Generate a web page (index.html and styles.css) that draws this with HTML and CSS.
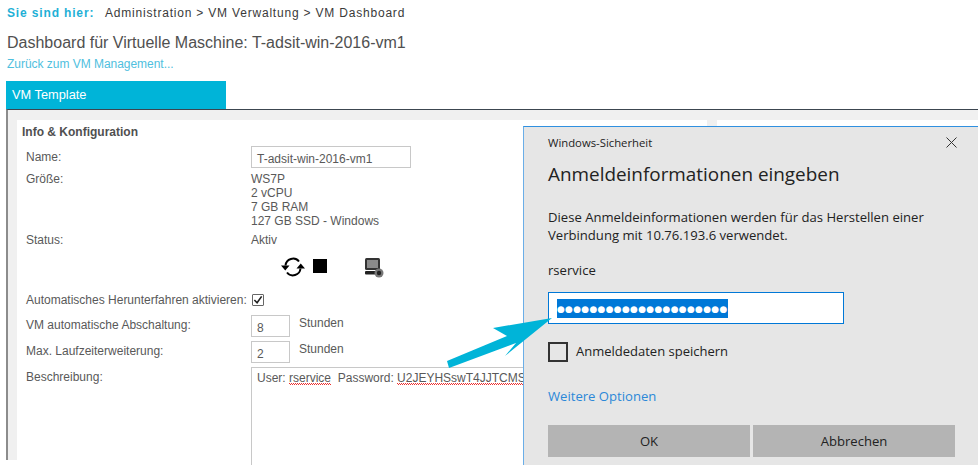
FILE: index.html
```html
<!DOCTYPE html>
<html lang="de">
<head>
<meta charset="utf-8">
<title>VM Dashboard</title>
<link rel="stylesheet" href="styles.css">
</head>
<body>
<nav class="crumbs"><b class="crumbs-here">Sie sind hier:</b><span class="crumbs-path">Administration &gt; VM Verwaltung &gt; VM Dashboard</span></nav>
<h1 class="title">Dashboard für Virtuelle Maschine: T-adsit-win-2016-vm1</h1>
<a class="back">Zurück zum VM Management...</a>
<div class="tab">VM Template</div>
<main class="panel">
  <section class="card card-main">
    <h2 class="card-title">Info &amp; Konfiguration</h2>
    <div class="form">
      <div class="row row-name"><span class="lbl">Name:</span><span class="field field-name">T-adsit-win-2016-vm1</span></div>
      <div class="row row-size"><span class="lbl">Größe:</span><span class="lines">WS7P<br>2 vCPU<br>7 GB RAM<br>127 GB SSD - Windows</span></div>
      <div class="row row-status"><span class="lbl">Status:</span><span>Aktiv</span></div>
      <div class="row row-icons"><span></span>
        <span class="icons">
          <svg class="ic-refresh" width="24" height="22" viewBox="0 0 24 22"><path d="M4.500 9.500A7.600 7.600 0 0 1 18 5.500M19.500 12.500A7.600 7.600 0 0 1 6 16.500" fill="none" stroke="#000" stroke-width="2"/><path d="M0 9.500h8.500l-4.250 5zM15.500 12.500h8.500l-4.250-5z" fill="#000"/></svg>
          <span class="ic-stop"></span>
          <svg class="ic-console" width="20" height="20" viewBox="0 0 20 20"><rect x="1" y="0" width="15" height="12" rx="1.500" fill="#333"/><rect x="3" y="2" width="11" height="8" fill="#8a8a8a"/><rect x="1" y="13" width="13" height="3.500" rx="1" fill="#222"/><circle cx="15" cy="15" r="4.500" fill="#777"/><circle cx="15" cy="15" r="2.200" fill="#222"/></svg>
        </span>
      </div>
      <div class="row row-check"><span class="lbl">Automatisches Herunterfahren aktivieren:</span>
        <span class="check"><svg width="11" height="10" viewBox="0 0 11 10"><path d="M1.500 5l3 3 5-7" fill="none" stroke="#222" stroke-width="1.800"/></svg></span>
      </div>
      <div class="row row-num"><span class="lbl">VM automatische Abschaltung:</span><span class="numwrap"><span class="field field-num">8</span><span class="unit">Stunden</span></span></div>
      <div class="row row-num"><span class="lbl">Max. Laufzeiterweiterung:</span><span class="numwrap"><span class="field field-num">2</span><span class="unit">Stunden</span></span></div>
      <div class="row row-desc"><span class="lbl">Beschreibung:</span><div class="area">User: <span class="typo">rservice</span>&nbsp; Password: <span class="typo">U2JEYHSswT4JJTCMS</span></div></div>
    </div>
  </section>
  <section class="card card-side"></section>
</main>

<svg class="arrow" width="120" height="60" viewBox="440 315 120 60"><polygon points="552,318 493,328 507,336 447,361 449,368 516,343 505,356" fill="#00b4d8"/></svg>

<aside class="dialog">
  <header class="dlg-top"><span>Windows-Sicherheit</span>
    <svg width="11" height="11" viewBox="0 0 11 11"><path d="M.5.5l10 10M10.500.5l-10 10" stroke="#333" stroke-width="1" fill="none"/></svg>
  </header>
  <h2 class="dlg-title">Anmeldeinformationen eingeben</h2>
  <p class="dlg-text">Diese Anmeldeinformationen werden für das Herstellen einer Verbindung mit 10.76.193.6 verwendet.</p>
  <p class="dlg-user">rservice</p>
  <div class="pw"><span class="pw-sel">&#9679;&#9679;&#9679;&#9679;&#9679;&#9679;&#9679;&#9679;&#9679;&#9679;&#9679;&#9679;&#9679;&#9679;&#9679;&#9679;&#9679;&#9679;&#9679;&#9679;&#9679;</span></div>
  <label class="save"><span class="save-box"></span><span class="save-text">Anmeldedaten speichern</span></label>
  <a class="more">Weitere Optionen</a>
  <div class="btns"><span class="btn">OK</span><span class="btn">Abbrechen</span></div>
</aside>
</body>
</html>
```
FILE: styles.css
```css
html, body {
  margin: 0;
  height: 465px;
  overflow: hidden;
  background: #fff;
}
body {
  position: relative;
  font-family: "Liberation Sans", Arial, sans-serif;
  font-size: 12px;
  color: #595959;
}
.crumbs {
  display: flex;
  height: 14px;
  line-height: 14px;
  margin: 6px 0 0 7px;
  letter-spacing: 0.8px;
}
.crumbs-here {
  width: 98px;
  color: #1fb0d6;
  letter-spacing: 0.85px;
}
.crumbs-path { color: #3a3a3a; }
.title {
  margin: 14px 0 0 7px;
  font-size: 16px;
  line-height: 18px;
  font-weight: 400;
  color: #505050;
}
.back {
  display: block;
  margin: 5px 0 0 7px;
  line-height: 14px;
  font-size: 12px;
  letter-spacing: -0.03px;
  color: #4fc0de;
}
.tab {
  box-sizing: border-box;
  width: 220px;
  height: 28px;
  margin: 10px 0 0 6px;
  padding-left: 6px;
  line-height: 28px;
  background: #00b4d8;
  color: #fff;
  font-size: 12.800px;
}
.panel {
  display: flex;
  gap: 10px;
  height: 340px;
  margin-left: 6px;
  padding: 10px 0 0 9px;
  border-top: 1px solid #3c4650;
  border-left: 2px solid #8c8c8c;
  background: #f0f0f0;
}
.card { background: #fff; }
.card-main { width: 690px; flex: none; }
.card-side { flex: 1; }
.card-title {
  margin: 0;
  padding: 5px 0 0 5px;
  height: 21px;
  line-height: 14px;
  font-size: 12px;
  font-weight: 700;
  color: #505050;
}
.form { padding: 0 0 0 9px; }
.row {
  display: grid;
  grid-template-columns: 225px 1fr;
  line-height: 14px;
}
.lbl { display: block; }
.row-name { height: 22px; margin-bottom: 4px; }
.row-name .lbl { padding-top: 4px; }
.row-size { height: 56px; margin-bottom: 5px; }
.row-status { height: 14px; margin-bottom: 9px; }
.row-icons { height: 22px; margin-bottom: 14px; }
.row-check { height: 16px; margin-bottom: 7px; align-items: center; }
.row-num { height: 22px; margin-bottom: 4px; }
.row-num .lbl { padding-top: 3px; }
.field {
  box-sizing: border-box;
  display: block;
  border: 1px solid #c8c8c8;
  height: 22px;
  line-height: 22px;
  padding: 1px 0 0 5px;
}
.field-name { width: 160px; }
.numwrap { display: flex; gap: 9px; }
.field-num { width: 39px; }
.unit { padding-top: 1px; }
.icons { display: flex; align-items: flex-start; margin-left: 30px; }
.ic-stop {
  width: 14px;
  height: 14px;
  margin: 3px 0 0 8px;
  background: #000;
}
.ic-console { margin: 2px 0 0 37px; }
.check {
  box-sizing: border-box;
  display: flex;
  align-items: center;
  justify-content: center;
  width: 12px;
  height: 12px;
  border: 1px solid #666;
  border-radius: 1px;
  margin-left: 1px;
}
.row-desc .lbl { padding-top: 3px; }
.area {
  box-sizing: border-box;
  height: 120px;
  border: 1px solid #c8c8c8;
  padding: 3px 0 0 5px;
  white-space: nowrap;
  overflow: hidden;
}
.typo {
  background:
    repeating-linear-gradient(90deg, #ec3030 0 1px, transparent 1px 2px) left bottom 1px / 100% 1px no-repeat,
    repeating-linear-gradient(90deg, transparent 0 1px, #ec3030 1px 2px) left bottom 0 / 100% 1px no-repeat;
}
.arrow {
  position: absolute;
  left: 440px;
  top: 315px;
  z-index: 3;
}
.dialog {
  box-sizing: border-box;
  position: absolute;
  left: 523px;
  top: 126px;
  width: 455px;
  height: 339px;
  padding: 0 0 0 24px;
  background: #e6e6e6;
  border-top: 1px solid #2f90e0;
  border-left: 1px solid #6aaee8;
  font-family: "Open Sans", "Noto Sans", sans-serif;
  color: #222;
  z-index: 2;
}
.dlg-top {
  display: flex;
  justify-content: space-between;
  align-items: center;
  height: 31px;
  padding-right: 21px;
  font-size: 11.300px;
}
.dlg-title {
  margin: 2px 0 0;
  height: 28px;
  line-height: 28px;
  font-size: 18.900px;
  font-weight: 400;
}
.dlg-text {
  margin: 20px 0 0;
  width: 420px;
  font-size: 13.100px;
  line-height: 18px;
}
.dlg-user {
  margin: 17px 0 0;
  font-size: 13.100px;
  line-height: 18px;
}
.pw {
  box-sizing: border-box;
  margin-top: 13px;
  width: 296px;
  height: 32px;
  padding: 6px 0 0 8px;
  background: #fff;
  border: 1px solid #0078d7;
}
.pw-sel {
  display: block;
  width: fit-content;
  height: 19px;
  line-height: 20px;
  background: #0078d7;
  color: #fff;
  font-family: "DejaVu Sans", sans-serif;
  font-size: 9px;
  letter-spacing: 0.270px;
  white-space: nowrap;
}
.save {
  display: flex;
  align-items: center;
  gap: 8px;
  margin-top: 18px;
  height: 20px;
  font-size: 13px;
}
.save-box {
  box-sizing: border-box;
  width: 20px;
  height: 20px;
  border: 2px solid #333;
}
.save-text { margin-top: -3px; }
.more {
  display: block;
  margin-top: 25px;
  height: 18px;
  line-height: 18px;
  font-size: 13.100px;
  color: #2b88d8;
}
.btns {
  display: flex;
  gap: 3px;
  margin-top: 20px;
}
.btn {
  width: 202px;
  height: 32px;
  line-height: 32px;
  text-align: center;
  background: #b4b4b4;
  font-size: 13.100px;
}
```
